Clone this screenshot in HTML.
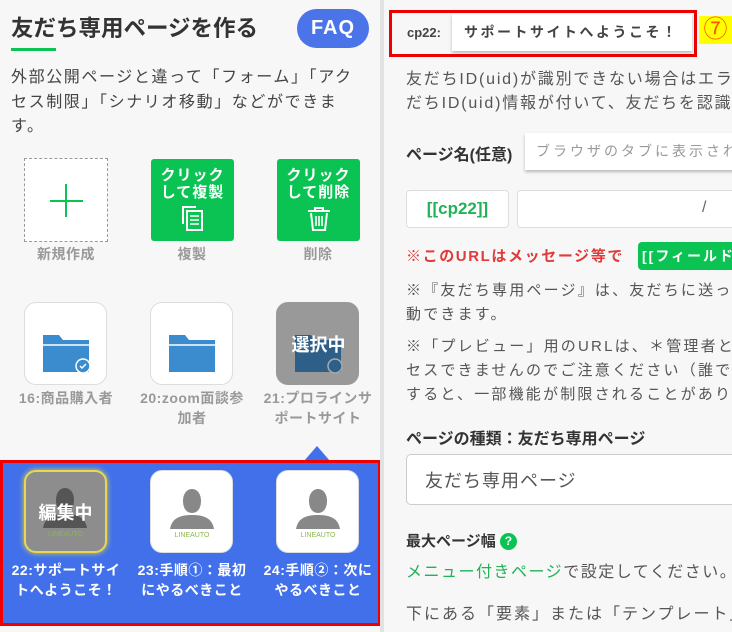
<!DOCTYPE html>
<html><head><meta charset="utf-8"><style>
*{margin:0;padding:0;box-sizing:border-box}
body{width:732px;height:632px;overflow:hidden;background:#f7f7f7;font-family:"Liberation Sans","Noto Sans CJK JP",sans-serif;position:relative;color:#444}
.a{position:absolute;white-space:nowrap}
#left{position:absolute;left:0;top:0;width:381px;height:632px;background:#f7f7f8}
#div{position:absolute;left:380px;top:0;width:4px;height:632px;background:#e2e2e4}
.tile{position:absolute;width:83px;height:83px;border-radius:12px;background:#fff;border:1px solid #ddd;overflow:hidden}
.lbl{position:absolute;width:126px;text-align:center;font-size:14px;font-weight:bold;color:#999;line-height:20px;letter-spacing:.5px}
.g{position:absolute;width:83px;height:82px;background:#0ac353;border-radius:3px;color:#fff;font-weight:bold;font-size:15px;line-height:17px;text-align:center;padding-top:8px;letter-spacing:1px}
.wl{color:#fff}
.p{font-size:15px;color:#555;line-height:24px;letter-spacing:2.2px}
</style></head><body>
<div id="left">
<div class="a" style="left:11px;top:11px;font-size:22.5px;font-weight:bold;color:#333">友だち専用ページを作る</div>
<div class="a" style="left:11px;top:48px;width:45px;height:3px;background:#0ac353"></div>
<div class="a" style="left:297px;top:9px;width:72px;height:39px;border-radius:20px;background:#4a74e8;color:#fff;font-weight:bold;font-size:20px;text-align:center;line-height:39px;letter-spacing:1px">FAQ</div>
<div class="a" style="left:11px;top:66px;font-size:16px;line-height:24.5px;color:#444;letter-spacing:1.6px">外部公開ページと違って「フォーム」「アク<br>セス制限」「シナリオ移動」などができま<br>す。</div>

<div class="a" style="left:24px;top:158px;width:84px;height:84px;border:1px dashed #999;background:#fff"></div>
<div class="a" style="left:50px;top:200px;width:33px;height:2px;background:#0ac353"></div>
<div class="a" style="left:65px;top:184px;width:2px;height:33px;background:#0ac353"></div>
<div class="lbl" style="left:3px;top:244px">新規作成</div>

<div class="g" style="left:151px;top:159px">クリック<br>して複製
<svg width="26" height="28" viewBox="0 0 26 28" style="display:block;margin:4px auto 0"><path d="M3 19V2h13" fill="none" stroke="#fff" stroke-width="2"/><rect x="7" y="6" width="15" height="19" fill="none" stroke="#fff" stroke-width="2"/><path d="M10 11h9M10 15h9M10 19h9" stroke="#fff" stroke-width="1.6"/></svg></div>
<div class="lbl" style="left:129px;top:244px">複製</div>

<div class="g" style="left:277px;top:159px">クリック<br>して削除
<svg width="26" height="28" viewBox="0 0 26 28" style="display:block;margin:4px auto 0"><path d="M2 6h22M9 6V3h8v3M5 8l2 17h12l2-17" fill="none" stroke="#fff" stroke-width="2"/><path d="M10 11v10M13 11v10M16 11v10" stroke="#fff" stroke-width="1.6"/></svg></div>
<div class="lbl" style="left:255px;top:244px">削除</div>

<div class="tile" style="left:24px;top:302px"><svg width="83" height="83" viewBox="0 0 83 83"><path d="M18 32h16l4 5h26v32H18z" fill="#3a8ccf"/><path d="M18 42h46" stroke="#fff" stroke-width="1.5"/><circle cx="58" cy="63" r="7" fill="#3a8ccf" stroke="#fff" stroke-width="1.5"/><path d="M55 63l2 2 4-4" stroke="#fff" stroke-width="1.5" fill="none"/></svg></div>
<div class="lbl" style="left:3px;top:388px">16:商品購入者</div>
<div class="tile" style="left:150px;top:302px"><svg width="83" height="83" viewBox="0 0 83 83"><path d="M18 32h16l4 5h26v32H18z" fill="#3a8ccf"/><path d="M18 42h46" stroke="#fff" stroke-width="1.5"/></svg></div>
<div class="lbl" style="left:129px;top:388px">20:zoom面談参<br>加者</div>
<div class="tile" style="left:276px;top:302px;background:#999;border-color:#999"><svg width="83" height="83" viewBox="0 0 83 83" style="position:absolute;left:0;top:0"><path d="M18 32h16l4 5h26v32H18z" fill="#2e5f88"/><circle cx="58" cy="63" r="7" fill="#2e5f88" stroke="#aaa" stroke-width="1.5"/></svg><div class="a" style="left:0;width:83px;top:28px;text-align:center;color:#fff;font-weight:bold;font-size:18px">選択中</div></div>
<div class="lbl" style="left:255px;top:388px">21:プロラインサ<br>ポートサイト</div>

<div class="a" style="left:304px;top:446px;width:0;height:0;border-left:13px solid transparent;border-right:13px solid transparent;border-bottom:15px solid #4170ea"></div>
<div class="a" style="left:0;top:460px;width:381px;height:166px;background:#4170ea;border:3px solid #e00"></div>

<div class="tile" style="left:24px;top:470px;background:#8d8d8d;border:2px solid #e8d84a;box-shadow:0 0 6px #e8d84a"><svg width="83" height="83" viewBox="0 0 83 83" style="position:absolute;left:-2px;top:-2px"><path d="M32 30c0-16 18-16 18 0c0 8-4 12-9 12s-9-4-9-12z" fill="#555"/><path d="M19 58c2-12 12-14 22-14s20 2 22 14z" fill="#555"/></svg><div class="a" style="left:0;width:79px;top:27px;text-align:center;color:#fff;font-weight:bold;font-size:18px">編集中</div><div class="a" style="left:0;width:79px;top:59px;text-align:center;color:#8bb84a;font-size:7px">LINEAUTO</div></div>
<div class="lbl wl" style="left:3px;top:560px">22:サポートサイ<br>トへようこそ！</div>
<div class="tile" style="left:150px;top:470px"><svg width="83" height="83" viewBox="0 0 83 83"><path d="M32 30c0-16 18-16 18 0c0 8-4 12-9 12s-9-4-9-12z" fill="#888"/><path d="M19 58c2-12 12-14 22-14s20 2 22 14z" fill="#888"/><text x="41" y="66" font-size="7" fill="#8bb84a" text-anchor="middle" font-family="Liberation Sans">LINEAUTO</text></svg></div>
<div class="lbl wl" style="left:129px;top:560px">23:手順①：最初<br>にやるべきこと</div>
<div class="tile" style="left:276px;top:470px"><svg width="83" height="83" viewBox="0 0 83 83"><path d="M32 30c0-16 18-16 18 0c0 8-4 12-9 12s-9-4-9-12z" fill="#888"/><path d="M19 58c2-12 12-14 22-14s20 2 22 14z" fill="#888"/><text x="41" y="66" font-size="7" fill="#8bb84a" text-anchor="middle" font-family="Liberation Sans">LINEAUTO</text></svg></div>
<div class="lbl wl" style="left:255px;top:560px">24:手順②：次に<br>やるべきこと</div>
</div>
<div id="div"></div>

<div class="a" style="left:389px;top:10px;width:308px;height:47px;border:3px solid #e00"></div>
<div class="a" style="left:407px;top:25px;font-size:13px;font-weight:bold;color:#444">cp22:</div>
<div class="a" style="left:452px;top:14px;width:240px;height:37px;background:#fff;box-shadow:0 2px 3px rgba(0,0,0,.25);font-size:14px;font-weight:bold;color:#444;letter-spacing:2.5px;padding:8px 0 0 12px">サポートサイトへようこそ！</div>
<div class="a" style="left:699px;top:16px;width:33px;height:28px;background:#ff0;color:#f50;font-size:24px;line-height:28px;text-align:center">⑦</div>

<div class="a p" style="left:406px;top:68px;font-size:16px;letter-spacing:1.8px">友だちID(uid)が識別できない場合はエラ<br>だちID(uid)情報が付いて、友だちを認識</div>
<div class="a" style="left:406px;top:141px;font-size:16px;font-weight:bold;color:#333">ページ名(任意)</div>
<div class="a" style="left:525px;top:133px;width:220px;height:37px;background:#fff;box-shadow:0 2px 3px rgba(0,0,0,.25);font-size:14px;color:#999;letter-spacing:3px;padding:8px 0 0 11px">ブラウザのタブに表示され</div>
<div class="a" style="left:406px;top:190px;width:103px;height:38px;background:#fff;border:1px solid #ddd;border-radius:4px;color:#22b257;font-weight:bold;font-size:17px;text-align:center;line-height:36px">[[cp22]]</div>
<div class="a" style="left:517px;top:190px;width:230px;height:38px;background:#fff;border:1px solid #ddd;border-radius:4px;color:#666;font-size:16px;padding:8px 0 0 184px">/</div>
<div class="a" style="left:406px;top:245px;font-size:15px;font-weight:bold;color:#e03a3a;letter-spacing:1.6px">※このURLはメッセージ等で</div>
<div class="a" style="left:638px;top:242px;width:110px;height:28px;background:#0ac353;border-radius:4px;color:#fff;font-weight:bold;font-size:14px;letter-spacing:2px;padding:4px 0 0 4px">[[フィールド</div>
<div class="a p" style="left:406px;top:279px">※『友だち専用ページ』は、友だちに送っ<br>動できます。</div>
<div class="a p" style="left:406px;top:335px">※「プレビュー」用のURLは、＊管理者と<br>セスできませんのでご注意ください（誰で<br>すると、一部機能が制限されることがあり</div>
<div class="a" style="left:406px;top:425px;font-size:16px;font-weight:bold;color:#333">ページの種類：友だち専用ページ</div>
<div class="a" style="left:406px;top:454px;width:340px;height:51px;background:#fff;border:1px solid #ccc;border-radius:5px;font-size:18px;color:#555;padding:12px 0 0 18px;letter-spacing:1px">友だち専用ページ</div>
<div class="a" style="left:406px;top:530px;font-size:15px;font-weight:bold;color:#333">最大ページ幅 <span style="display:inline-block;width:17px;height:17px;border-radius:50%;background:#0ac353;color:#fff;font-size:12px;text-align:center;line-height:17px;vertical-align:1px">?</span></div>
<div class="a" style="left:406px;top:558px;font-size:16px;color:#555;letter-spacing:1.5px"><span style="color:#22b257">メニュー付きページ</span>で設定してください。</div>
<div class="a" style="left:406px;top:600px;font-size:16px;color:#555;letter-spacing:2px">下にある「要素」または「テンプレート」</div>
</body></html>
